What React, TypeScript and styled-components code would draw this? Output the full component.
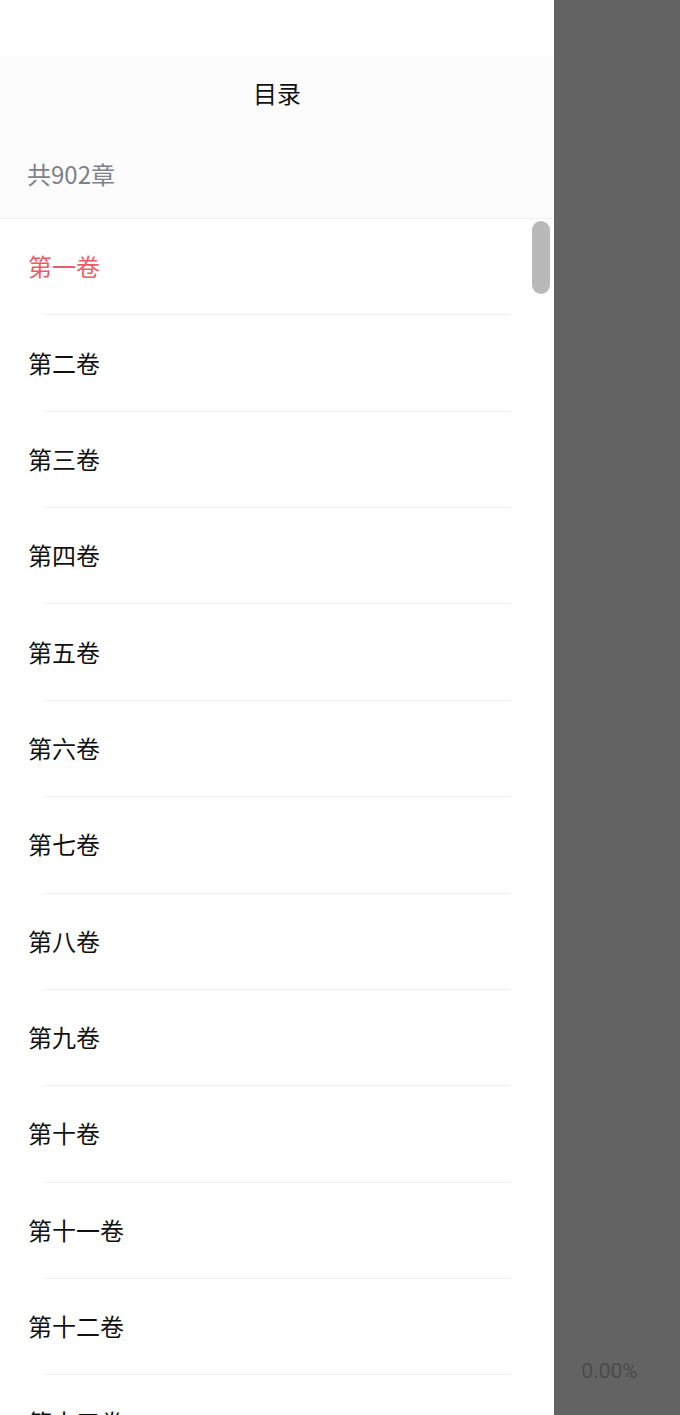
import * as React from 'react';
import styled, { createGlobalStyle } from 'styled-components';

const GlobalStyle = createGlobalStyle`
  html, body {
    margin: 0;
    padding: 0;
    height: 1415px;
    overflow: hidden;
  }
  body {
    font-family: "Noto Sans CJK SC", "Noto Sans", sans-serif;
  }
`;

const Screen = styled.div`
  display: flex;
  width: 680px;
  height: 1415px;
  overflow: hidden;
`;

const Drawer = styled.div`
  display: flex;
  flex-direction: column;
  width: 554px;
  height: 100%;
  background-color: #ffffff;
  flex-shrink: 0;
`;

const StatusBar = styled.div`
  height: 56px;
  background-color: #ffffff;
`;

const Header = styled.div`
  display: flex;
  flex-direction: column;
  background-color: #fcfcfc;
  border-bottom: 1px solid #f0f0f0;
`;

const Title = styled.div`
  height: 72px;
  display: flex;
  align-items: center;
  justify-content: center;
  font-size: 24px;
  color: #111111;
`;

const Count = styled.div`
  height: 90px;
  display: flex;
  align-items: center;
  padding-left: 27px;
  font-size: 24px;
  color: #7c818b;
`;

const ListWrapper = styled.div`
  position: relative;
  flex: 1;
  overflow: hidden;
`;

const List = styled.ul`
  list-style: none;
  margin: 0;
  padding: 0;
`;

const Row = styled.li<{ $active?: boolean }>`
  position: relative;
  height: 96.36px;
  display: flex;
  align-items: center;
  padding-left: 28px;
  padding-bottom: 3px;
  font-size: 24px;
  color: ${p => (p.$active ? '#ee5a63' : '#111111')};
  box-sizing: border-box;

  &::after {
    content: '';
    position: absolute;
    left: 43px;
    right: 43px;
    bottom: 0;
    height: 1px;
    background-color: #f0f0f0;
  }
`;

const ScrollThumb = styled.div`
  position: absolute;
  top: 2px;
  right: 4px;
  width: 18px;
  height: 73px;
  border-radius: 9px;
  background-color: #b9b9b9;
`;

const Backdrop = styled.div`
  flex: 1;
  display: flex;
  align-items: flex-end;
  justify-content: center;
  background-color: #636363;
  padding-bottom: 32px;
`;

const Progress = styled.div`
  font-family: Roboto, "Noto Sans", sans-serif;
  font-size: 21px;
  color: #4b4b4b;
  margin-right: 15px;
`;

const volumes = [
  '第一卷',
  '第二卷',
  '第三卷',
  '第四卷',
  '第五卷',
  '第六卷',
  '第七卷',
  '第八卷',
  '第九卷',
  '第十卷',
  '第十一卷',
  '第十二卷',
  '第十三卷',
  '第十四卷',
];

export default function App() {
  return (
    <>
      <GlobalStyle />
      <Screen>
        <Drawer>
          <StatusBar />
          <Header>
            <Title>目录</Title>
            <Count>共902章</Count>
          </Header>
          <ListWrapper>
            <List>
              {volumes.map((v, i) => (
                <Row key={v} $active={i === 0}>
                  {v}
                </Row>
              ))}
            </List>
            <ScrollThumb />
          </ListWrapper>
        </Drawer>
        <Backdrop>
          <Progress>0.00%</Progress>
        </Backdrop>
      </Screen>
    </>
  );
}
